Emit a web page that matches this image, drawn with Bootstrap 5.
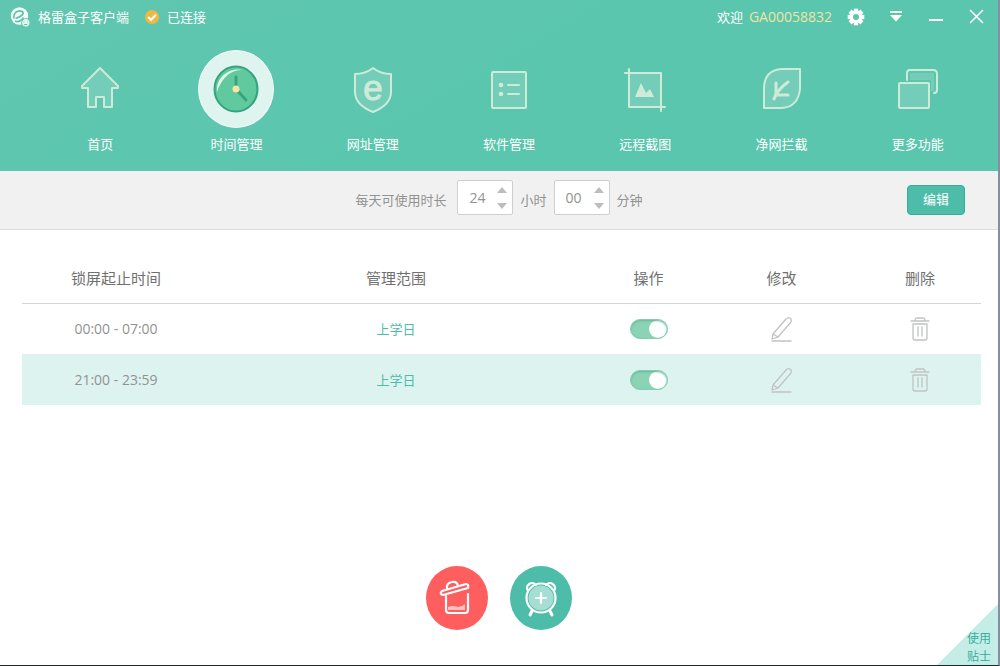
<!DOCTYPE html>
<html lang="zh-CN">
<head>
<meta charset="utf-8">
<meta name="viewport" content="width=device-width, initial-scale=1">
<title>格雷盒子客户端</title>
<link href="https://cdn.jsdelivr.net/npm/bootstrap@5.3.0/dist/css/bootstrap.min.css" rel="stylesheet">
<style>
  body { font: 13px/20px "Open Sans", "Noto Sans CJK SC", sans-serif; color: #929292; background: #fff; }
  svg { display: block; }
  .latin { font-size: 14px; }
  .bare { border: 0; padding: 0; background: none; color: inherit; }
  .app-window { border-right: 2px solid #858f9f; border-bottom: 1px solid #20252b; }
  .app-header { background: linear-gradient(150deg, #60c6b0, #5ac6ae 60%, #5ac6ae); color: #fff; }
  .title-bar { height: 33px; padding: 0 11px 0 10px; }
  .account { color: #f0e3a4; margin-left: 6px; }
  .window-tools { gap: 18px; margin-left: 13px; }
  .main-nav { padding: 17px 12px 17px 32px; }
  .main-nav a { flex: 1 1 0; color: #fff; text-decoration: none; }
  .nav-disc { width: 76px; height: 78px; margin-bottom: 6px; border-radius: 50%; }
  .active .nav-disc { background: #dff4ef; border: 1px solid #f2fbf9; }
  .line-icon { fill: none; stroke: #cdebd8; stroke-width: 2; stroke-linejoin: round; stroke-linecap: round; }
  .line-icon .tint { fill: #74cdb9; }
  .line-icon .solid { fill: #cdebd8; stroke: none; }
  .quota-bar { background: #f1f1f1; border-bottom: 1px solid #dedede; height: 59px; display: grid; grid-template-columns: 1fr auto 1fr; padding: 0 33px; }
  .quota { gap: 7px; grid-column: 2; }
  .spin { width: 56px; height: 35px; border: 1px solid #cfcfcf; border-radius: 2px; background: #fff; margin-bottom: 5px; }
  .spin input { width: 38px; min-width: 0; text-align: center; font-size: 14px; color: #929292; outline: 0; }
  .spin-keys { width: 16px; gap: 8px; padding-right: 4px; }
  .edit-btn { width: 58px; height: 30px; padding: 0; border: 1px solid #35ae98; border-radius: 4px; background: #4dbda9; color: #fff; font-size: 13px; }
  .edit-btn:hover { background: #43b09c; color: #fff; }
  .schedule { padding: 24px 17px 0 22px; }
  .schedule table { table-layout: fixed; text-align: center; width: 100%; }
  .schedule th { height: 49px; font-size: 15px; font-weight: 400; color: #707070; border-bottom: 1px solid #d4d4d4; }
  .schedule td { height: 51px; }
  .schedule th:last-child, .schedule td:last-child { padding-left: 12px; }
  .schedule tr.chosen { background: #ddf3ef; }
  .schedule svg { margin: auto; }
  .schedule td .bare { display: block; margin: 0 auto; }
  .col-time { width: 188px; }
  .col-tool { width: 133px; }
  .scope { color: #4dbda9; text-decoration: none; }
  .form-check-input.toggle { display: block; width: 38px; height: 20px; margin: 0 auto; border: 1px solid #84cdb0; border-radius: 10px; box-shadow: inset 0 1px 2px #69b597;
    background: #8bd3b5 url("data:image/svg+xml,%3Csvg xmlns='http://www.w3.org/2000/svg' viewBox='0 0 18 18'%3E%3Ccircle cx='9' cy='9' r='9' fill='white'/%3E%3C/svg%3E") right center / 18px no-repeat; }
  .form-check-input.toggle:not(:checked) { background-position: left center; background-color: #ccc; }
  .pencil, .bin { fill: none; stroke: #c1c3c3; stroke-width: 1.3; stroke-linejoin: round; stroke-linecap: round; }
  .actions { gap: 22px; padding-bottom: 35px; }
  .round-btn { width: 62px; height: 64px; border-radius: 50%; }
  .remove { background: #ff5e5f; }
  .add { background: #4dbda9; }
  .tips { width: 61px; height: 61px; right: 0; bottom: 0; padding: 26px 7px 0 0; background: #c4ede8; clip-path: polygon(100% 0, 100% 100%, 0 100%); font-size: 12px; line-height: 18px; color: #38ad9b; text-align: right; text-decoration: none; }
</style>
</head>
<body>
<div class="app-window min-vh-100 d-flex flex-column position-relative">
  <header class="app-header">
    <div class="title-bar d-flex align-items-center">
      <svg width="20" height="20" viewBox="0 0 20 20" aria-hidden="true">
        <circle cx="9.500" cy="9" r="8.700" fill="#f4fcfa"/>
        <path d="M4 11.500C3 6 8 2.500 12 4.500c3 2 0 4.500-6.500 7M5 14c3 1.500 6 0 8.500-3.500" fill="none" stroke="#5abfa9" stroke-width="1.600"/>
        <circle cx="15.800" cy="15.800" r="4.200" fill="#e9f8f4" stroke="#61c7b1"/>
        <path d="M14 14.500v1M17.500 14.500v1M14 17.500h3.500" stroke="#61c7b1"/>
      </svg>
      <span class="ms-2">格雷盒子客户端</span>
      <svg class="ms-3" width="14" height="14" viewBox="0 0 14 14" aria-hidden="true"><circle cx="7" cy="7" r="7" fill="#f0b840"/><path d="m3.200 7 2.800 2.900 5-5.400" fill="none" stroke="#fff" stroke-width="2.200"/></svg>
      <span class="ms-2">已连接</span>
      <span class="ms-auto">欢迎</span>
      <span class="account latin">GA00058832</span>
      <div class="window-tools d-flex align-items-center">
        <button class="bare" aria-label="设置"><svg width="22" height="20" viewBox="-11 -10 22 20"><g fill="#fff"><circle r="6.500"/><path d="M-2.200-8.300h4.400v16.600h-4.400z"/><path d="M-2.200-8.300h4.400v16.600h-4.400z" transform="rotate(45)"/><path d="M-2.200-8.300h4.400v16.600h-4.400z" transform="rotate(90)"/><path d="M-2.200-8.300h4.400v16.600h-4.400z" transform="rotate(135)"/></g><circle r="3" fill="#5ac6ae"/></svg></button>
        <button class="bare" aria-label="菜单"><svg width="22" height="20" viewBox="0 0 22 20" fill="#fff"><path d="M5 4h12v2H5zM5 8h12l-6 6.500z"/></svg></button>
        <button class="bare" aria-label="最小化"><svg width="22" height="20" viewBox="0 0 22 20"><path d="M4 13h14" stroke="#fff" stroke-width="2"/></svg></button>
        <button class="bare" aria-label="关闭"><svg width="22" height="20" viewBox="0 0 22 20"><path d="m5 3 13 13M18 3 5 16" stroke="#fff" stroke-width="1.500"/></svg></button>
      </div>
    </div>
    <nav class="main-nav d-flex">
      <a href="#" class="d-flex flex-column align-items-center"><span class="nav-disc d-flex align-items-center justify-content-center">
        <svg class="line-icon" width="48" height="48" viewBox="0 0 48 48"><path class="tint" d="M24 3 6 21v2h6v19h8V32h8v10h8V23h6v-2z"/></svg></span>首页</a>
      <a href="#" class="active d-flex flex-column align-items-center" aria-current="page"><span class="nav-disc d-flex align-items-center justify-content-center">
        <svg width="48" height="48" viewBox="0 0 48 48"><ellipse cx="24" cy="24" rx="21.500" ry="22.500" fill="#60c99e" stroke="#35a47e" stroke-width="2"/><path d="M5 27C4 12 17 2 31 5 18 4 9 14 5 27" fill="#e5f7ed"/><path d="M24 24V12M24 24l10 11" stroke="#35a47e" stroke-width="2.800" stroke-linecap="round"/><circle cx="24" cy="24" r="3.500" fill="#fbe3a2"/></svg></span>时间管理</a>
      <a href="#" class="d-flex flex-column align-items-center"><span class="nav-disc d-flex align-items-center justify-content-center">
        <svg class="line-icon" width="48" height="48" viewBox="0 0 48 48"><path class="tint" d="M24 3c-5 4-10 6-18 6v18c0 10 8 16 18 20 10-4 18-10 18-20V9c-8 0-13-2-18-6z"/><text x="24" y="35" font-family="Liberation Sans, sans-serif" font-size="35" text-anchor="middle" fill="#cdebd8" stroke-width="1">e</text></svg></span>网址管理</a>
      <a href="#" class="d-flex flex-column align-items-center"><span class="nav-disc d-flex align-items-center justify-content-center">
        <svg class="line-icon" width="48" height="48" viewBox="0 0 48 48"><rect class="tint" x="7" y="7" width="34" height="36" rx="1"/><path d="M23 20h11M23 29h11"/><circle class="solid" cx="16" cy="20" r="2.300"/><circle class="solid" cx="16" cy="29" r="2.300"/></svg></span>软件管理</a>
      <a href="#" class="d-flex flex-column align-items-center"><span class="nav-disc d-flex align-items-center justify-content-center">
        <svg class="line-icon" width="48" height="48" viewBox="0 0 48 48"><path class="tint" d="M8 8h32v34H8z"/><path d="M4 8h4V4M40 46v-4h4"/><path class="solid" d="m14 32 6-14 5 10 4-4 4 8z"/></svg></span>远程截图</a>
      <a href="#" class="d-flex flex-column align-items-center"><span class="nav-disc d-flex align-items-center justify-content-center">
        <svg class="line-icon" width="48" height="48" viewBox="0 0 48 48"><path class="tint" d="M6 43V24Q6 5 24 4h18v20q-2 18-18 19z"/><path d="M16 34q3-9 14-17M18 18v12h12" stroke-width="3"/></svg></span>净网拦截</a>
      <a href="#" class="d-flex flex-column align-items-center"><span class="nav-disc d-flex align-items-center justify-content-center">
        <svg class="line-icon" width="48" height="48" viewBox="0 0 48 48"><path d="M16 15V8h24v18h-3V15z" fill="#74cdb9" stroke="none"/><path d="M13 15V8q0-3 3-3h23q4 0 4 4v16q0 3-3 3"/><rect class="tint" x="5" y="18" width="30" height="25" rx="1"/></svg></span>更多功能</a>
    </nav>
  </header>

  <form class="quota-bar align-items-center" onsubmit="return false">
    <div class="quota d-flex align-items-center">
      <label for="hours" class="me-1">每天可使用时长</label>
      <div class="spin d-flex align-items-center">
        <input id="hours" class="bare" type="text" inputmode="numeric" value="24">
        <div class="spin-keys d-flex flex-column">
          <button type="button" class="bare" aria-label="增加小时"><svg width="12" height="7" viewBox="0 0 12 7"><path d="M6 0 11 6H1z" fill="#bdbdbd"/></svg></button>
          <button type="button" class="bare" aria-label="减少小时"><svg width="12" height="7" viewBox="0 0 12 7"><path d="M1 1h10L6 7z" fill="#bdbdbd"/></svg></button>
        </div>
      </div>
      <label for="hours">小时</label>
      <div class="spin d-flex align-items-center">
        <input id="minutes" class="bare" type="text" inputmode="numeric" value="00">
        <div class="spin-keys d-flex flex-column">
          <button type="button" class="bare" aria-label="增加分钟"><svg width="12" height="7" viewBox="0 0 12 7"><path d="M6 0 11 6H1z" fill="#bdbdbd"/></svg></button>
          <button type="button" class="bare" aria-label="减少分钟"><svg width="12" height="7" viewBox="0 0 12 7"><path d="M1 1h10L6 7z" fill="#bdbdbd"/></svg></button>
        </div>
      </div>
      <label for="minutes">分钟</label>
    </div>
    <div class="text-end"><button type="button" class="btn edit-btn">编辑</button></div>
  </form>

  <main class="schedule flex-grow-1">
    <table>
      <colgroup><col class="col-time"><col><col class="col-tool"><col class="col-tool"><col class="col-tool"></colgroup>
      <thead><tr><th scope="col">锁屏起止时间</th><th scope="col">管理范围</th><th scope="col">操作</th><th scope="col">修改</th><th scope="col">删除</th></tr></thead>
      <tbody>
        <tr>
          <td class="latin">00:00 - 07:00</td>
          <td><a href="#" class="scope">上学日</a></td>
          <td><input class="form-check-input toggle" type="checkbox" role="switch" aria-label="启用 00:00 - 07:00" checked></td>
          <td><button class="bare" aria-label="修改"><svg class="pencil" width="24" height="26" viewBox="0 0 24 26"><path d="m3 18 13-15q2-2 4-1t1 4L8 21l-6 2zM3 18l5 3M2 25h19"/></svg></button></td>
          <td><button class="bare" aria-label="删除"><svg class="bin" width="20" height="24" viewBox="0 0 20 24"><path d="M1 4h18M5 4q0-3 2-3h6q2 0 2 3M3 7h14v14q0 2-2 2H5q-2 0-2-2zM8 10v9M12 10v9"/></svg></button></td>
        </tr>
        <tr class="chosen">
          <td class="latin">21:00 - 23:59</td>
          <td><a href="#" class="scope">上学日</a></td>
          <td><input class="form-check-input toggle" type="checkbox" role="switch" aria-label="启用 21:00 - 23:59" checked></td>
          <td><button class="bare" aria-label="修改"><svg class="pencil" width="24" height="26" viewBox="0 0 24 26"><path d="m3 18 13-15q2-2 4-1t1 4L8 21l-6 2zM3 18l5 3M2 25h19"/></svg></button></td>
          <td><button class="bare" aria-label="删除"><svg class="bin" width="20" height="24" viewBox="0 0 20 24"><path d="M1 4h18M5 4q0-3 2-3h6q2 0 2 3M3 7h14v14q0 2-2 2H5q-2 0-2-2zM8 10v9M12 10v9"/></svg></button></td>
        </tr>
      </tbody>
    </table>
  </main>

  <div class="actions d-flex justify-content-center">
    <button class="bare round-btn remove" aria-label="全部删除"><svg width="62" height="64" viewBox="0 0 62 64" fill="none" stroke="#fff" stroke-width="2.200" stroke-linecap="round" stroke-linejoin="round"><path d="M20 30v14q0 3 3 3h16q3 0 3-3V28"/><path d="m16 25 24-7q3 0 2 4l-25 7q-4-1-1-4z"/><path d="M21 23q-1-6 5-7 5-1 6 4"/><path d="M22 41q5-2 10 0 4 0 7-3v6H22z" fill="#ffc0c0" stroke="none"/></svg></button>
    <button class="bare round-btn add" aria-label="添加时段"><svg width="62" height="64" viewBox="0 0 62 64" fill="none" stroke="#fff" stroke-width="2.200" stroke-linecap="round"><circle cx="31" cy="32" r="14.500"/><circle cx="31" cy="32" r="12.500" fill="#a6ded3" stroke="none"/><path d="M26 32h10M31 27v10"/><path d="M18 25c-4-5 4-11 8-6M44 25c4-5-4-11-8-6"/><path d="m22 45-2 4M40 45l2 4" stroke-width="3"/></svg></button>
  </div>
  <a href="#" class="tips position-absolute">使用<br>贴士</a>
</div>
<script src="https://cdn.jsdelivr.net/npm/bootstrap@5.3.0/dist/js/bootstrap.bundle.min.js"></script>
</body>
</html>
